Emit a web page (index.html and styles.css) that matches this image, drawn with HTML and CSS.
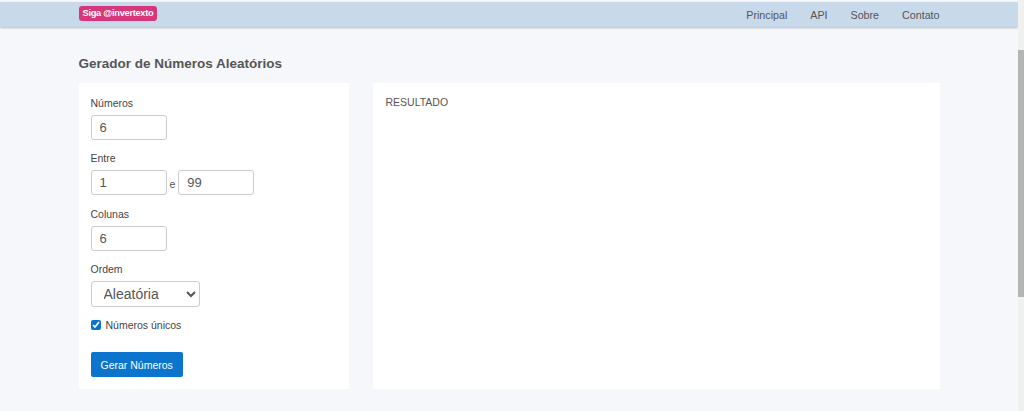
FILE: index.html
```html
<!DOCTYPE html>
<html lang="pt-BR">
  <head>
    <meta charset="UTF-8" />
    <meta name="viewport" content="width=device-width, initial-scale=1.0" />
    <title>Gerador de Números Aleatórios</title>
    <link rel="stylesheet" href="styles.css">
  </head>
  <body>
    <!-- topo -->
    <header class="topbar">
      <div class="wrap topbar-inner">
        <a class="badge" href="#">Siga @invertexto</a>
        <nav class="menu">
          <a href="#">Principal</a>
          <a href="#">API</a>
          <a href="#">Sobre</a>
          <a href="#">Contato</a>
        </nav>
      </div>
    </header>

    <main class="wrap">
      <h1 class="title">Gerador de Números Aleatórios</h1>
      <div class="panels">
        <!-- formulario -->
        <form class="card form">
          <div class="field">
            <label>Números</label>
            <input class="num" type="text" value="6">
          </div>
          <div class="field">
            <label>Entre</label>
            <div class="range">
              <input class="num" type="text" value="1">
              <span>e</span>
              <input class="num" type="text" value="99">
            </div>
          </div>
          <div class="field">
            <label>Colunas</label>
            <input class="num" type="text" value="6">
          </div>
          <div class="field">
            <label>Ordem</label>
            <select class="order">
              <option>Aleatória</option>
              <option>Crescente</option>
              <option>Decrescente</option>
            </select>
          </div>
          <label class="check"><input type="checkbox" checked> Números únicos</label>
          <button class="btn" type="button">Gerar Números</button>
        </form>
        <!-- resultado -->
        <section class="card result">
          <h2>RESULTADO</h2>
        </section>
      </div>
    </main>

    <!-- barra de rolagem -->
    <div class="scrollbar"><div class="thumb"></div></div>
  </body>
</html>
```

FILE: styles.css
```css
* {
  margin: 0;
  padding: 0;
  box-sizing: border-box;
}
body {
  min-height: 411px;
  padding: 2px 6px 0 0;
  background-color: #f5f7fb;
  font-family: "Liberation Sans", Arial, sans-serif;
  font-size: 10.5px;
  color: #444;
}
.wrap {
  width: 861px;
  margin: 0 auto;
}

/* topo */
.topbar {
  height: 25px;
  background-color: #c8d9e9;
  box-shadow: 0 1px 2px rgba(0, 0, 0, 0.25);
}
.topbar-inner {
  display: flex;
  justify-content: space-between;
  align-items: center;
  height: 100%;
}
.badge {
  margin-top: -3px;
  padding: 1px 4px;
  border-radius: 3px;
  background-color: #d8367a;
  color: #fff;
  font-size: 9.3px;
  font-weight: bold;
  letter-spacing: -0.3px;
  line-height: 13px;
  text-decoration: none;
}
.menu {
  display: flex;
  gap: 23px;
}
.menu a {
  color: #555;
  text-decoration: none;
  font-size: 10.7px;
}

.title {
  margin: 28px 0 11px;
  font-size: 13.5px;
  font-weight: bold;
  color: #555;
  line-height: 17px;
}
.panels {
  display: flex;
  gap: 24px;
}
.card {
  height: 306px;
  background-color: #fff;
}
.form {
  width: 270px;
  padding: 13px 12px 12px;
}
.result {
  flex: 1;
  padding: 13px;
}
.result h2 {
  font-size: 10.5px;
  font-weight: normal;
  color: #555;
}

/* campos */
.field {
  margin-bottom: 11.3px;
}
.field label {
  display: block;
  margin-bottom: 5px;
  line-height: 14px;
}
.num {
  width: 76px;
  height: 25px;
  padding: 0 8px;
  border: 1px solid #ccc;
  border-radius: 3px;
  font-family: inherit;
  font-size: 13px;
  color: #555;
}
.range {
  display: flex;
  align-items: center;
  gap: 3px;
}
.range span {
  margin-top: 3px;
  color: #555;
}
.order {
  width: 109px;
  height: 26px;
  padding: 0 8px;
  border: 1px solid #ccc;
  border-radius: 3px;
  background-color: #fff;
  font-family: inherit;
  font-size: 14px;
  color: #555;
}
.check {
  display: flex;
  align-items: center;
  gap: 5px;
  margin-top: 1px;
  line-height: 14px;
}
.check input {
  width: 10px;
  height: 10px;
  margin: 0;
  accent-color: #0a74cc;
}
.btn {
  margin-top: 20px;
  height: 25px;
  padding: 0 10px;
  border: 0;
  border-radius: 2px;
  background-color: #0b74cc;
  color: #fff;
  font-family: inherit;
  font-size: 10.5px;
}

.scrollbar {
  position: fixed;
  top: 0;
  right: 0;
  width: 6px;
  height: 100%;
  padding-top: 50px;
  background-color: #f0f0f0;
}
.thumb {
  height: 247px;
  background-color: #b5b5b5;
}
```
